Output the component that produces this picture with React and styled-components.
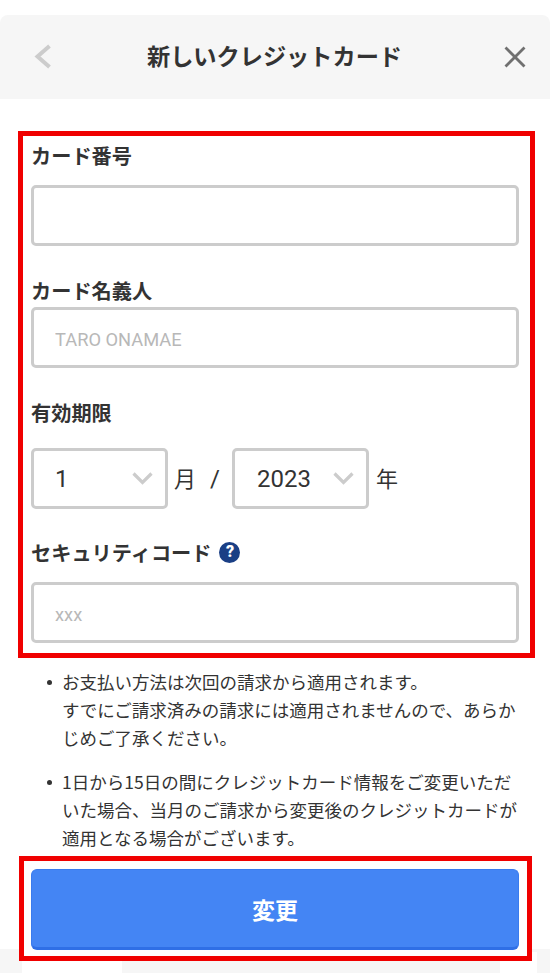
import React from 'react';
import styled, { createGlobalStyle } from 'styled-components';

const GlobalStyle = createGlobalStyle`
  html, body {
    margin: 0;
    padding: 0;
    background: #fff;
  }
  * {
    box-sizing: border-box;
  }
  body {
    font-family: "Noto Sans CJK JP", "Noto Sans", sans-serif;
    color: #333;
  }
`;

const Page = styled.div`
  width: 550px;
  height: 973px;
  overflow: hidden;
  padding-top: 15px;
  display: flex;
  flex-direction: column;
`;

const Header = styled.header`
  height: 84px;
  background: #f6f6f6;
  border-radius: 8px 8px 0 0;
  display: flex;
  align-items: center;
  justify-content: space-between;
  padding: 0 23px 0 31px;
  flex-shrink: 0;
`;

const HeaderTitle = styled.h1`
  margin: 0 9px 0 0;
  padding-bottom: 2px;
  font-size: 23.2px;
  line-height: 1;
  font-weight: 700;
  color: #333;
`;

const IconButton = styled.span`
  display: flex;
  width: 24px;
  height: 24px;
  align-items: center;
  justify-content: center;
`;

const FormBox = styled.section`
  margin: 32px 15px 0 18px;
  height: 527px;
  border: 5px solid #f00000;
  padding: 0 11px 0 8px;
`;

const Field = styled.div`
  height: ${(p) => p.$height}px;
  display: flex;
  flex-direction: column;
  justify-content: flex-end;
`;

const Label = styled.div`
  display: flex;
  align-items: center;
  gap: 8px;
  height: 30px;
  margin-bottom: ${(p) => p.$gap}px;
  font-size: 20.2px;
  font-weight: 700;
  line-height: 30px;
  color: #333;
`;

const TextInput = styled.input`
  display: block;
  width: 100%;
  height: 61px;
  border: 3px solid #ccc;
  border-radius: 5px;
  padding: 3px 21px 0;
  background: #fff;
  outline: none;
  font-family: "Roboto", sans-serif;
  font-size: 18.3px;
  color: #333;

  &::placeholder {
    color: #b8b8b8;
    opacity: 1;
  }
`;

const ExpiryRow = styled.div`
  display: flex;
  align-items: center;
  font-size: 22px;
  color: #333;
`;

const SelectBox = styled.div`
  width: ${(p) => p.$width}px;
  height: 61px;
  border: 3px solid #ccc;
  border-radius: 5px;
  padding: 0 12px 0 ${(p) => p.$left}px;
  display: flex;
  align-items: center;
  justify-content: space-between;
  font-family: "Roboto", sans-serif;
  font-size: 24px;
  color: #333;
`;

const Unit = styled.span`
  margin-left: ${(p) => p.$left}px;
  margin-bottom: 3px;
  line-height: 1;
`;

const Slash = styled.span`
  margin: 0 12px 0 14px;
  font-family: "Roboto", sans-serif;
  font-size: 24px;
  line-height: 1;
`;

const HelpBadge = styled.span`
  width: 21px;
  height: 21px;
  margin-top: -2px;
  border-radius: 50%;
  background: #1a3f85;
  color: #fff;
  display: flex;
  align-items: center;
  justify-content: center;
  font-family: "Roboto", sans-serif;
  font-size: 16px;
  font-weight: 900;
  line-height: 1;
`;

const Notes = styled.ul`
  list-style: none;
  margin: 10px 0 0 0;
  padding: 0 30px 0 62px;
  height: 188px;
  flex-shrink: 0;
`;

const Note = styled.li`
  position: relative;
  font-size: 17.5px;
  line-height: 28px;
  color: #333;
  margin-bottom: 16px;
  white-space: nowrap;

  &::before {
    content: '';
    position: absolute;
    left: -15px;
    top: 12px;
    width: 5px;
    height: 5px;
    border-radius: 50%;
    background: #333;
  }
`;

const ButtonBox = styled.section`
  margin: 0 18px 0 19px;
  height: 105px;
  flex-shrink: 0;
  border: 5px solid #f00000;
  padding: 8px 8px 6px 7px;
  background: #fff;
  position: relative;
  z-index: 1;
`;

const SubmitButton = styled.button`
  display: block;
  width: 100%;
  height: 100%;
  border: 1px solid #3a7bee;
  border-bottom: 3px solid #2f6fe6;
  border-radius: 6px;
  background: #4485f4;
  color: #fff;
  font-family: inherit;
  font-size: 23px;
  font-weight: 700;
`;

const FooterStrip = styled.div`
  flex: 1;
  margin-top: -12px;
  background: #f6f6f6;
  display: flex;
  justify-content: space-between;
  padding: 12px 13px 0 22px;
`;

const FooterTab = styled.div`
  width: ${(p) => p.$width}px;
  margin-top: ${(p) => p.$lift || 0}px;
  background: #fff;
`;

const Chevron = () => (
  <svg width="21" height="13" viewBox="0 0 21 13" fill="none">
    <path d="M1.5 1.5l9 9 9-9" stroke="#ccc" strokeWidth="3.2" />
  </svg>
);

const BackIcon = () => (
  <svg width="18" height="26" viewBox="0 0 18 26" fill="none">
    <path d="M15.5 2L3.5 12.5l12 10.5" stroke="#ccc" strokeWidth="4" />
  </svg>
);

const CloseIcon = () => (
  <svg width="24" height="24" viewBox="0 0 24 24" fill="none">
    <path d="M2.5 2.5l19 19M21.5 2.5l-19 19" stroke="#707070" strokeWidth="2.8" />
  </svg>
);

const App = () => (
  <Page>
    <GlobalStyle />
    <Header>
      <IconButton>
        <BackIcon />
      </IconButton>
      <HeaderTitle>新しいクレジットカード</HeaderTitle>
      <IconButton>
        <CloseIcon />
      </IconButton>
    </Header>

    <FormBox>
      <Field $height={110}>
        <Label $gap={14}>カード番号</Label>
        <TextInput />
      </Field>
      <Field $height={122}>
        <Label $gap={1}>カード名義人</Label>
        <TextInput placeholder="TARO ONAMAE" />
      </Field>
      <Field $height={141}>
        <Label $gap={20}>有効期限</Label>
        <ExpiryRow>
          <SelectBox $width={137} $left={21}>
            1
            <Chevron />
          </SelectBox>
          <Unit $left={6}>月</Unit>
          <Slash>/</Slash>
          <SelectBox $width={137} $left={22}>
            2023
            <Chevron />
          </SelectBox>
          <Unit $left={7}>年</Unit>
        </ExpiryRow>
      </Field>
      <Field $height={134}>
        <Label $gap={14}>
          セキュリティコード
          <HelpBadge>?</HelpBadge>
        </Label>
        <TextInput placeholder="xxx" />
      </Field>
    </FormBox>

    <Notes>
      <Note>
        お支払い方法は次回の請求から適用されます。
        <br />
        すでにご請求済みの請求には適用されませんので、あらか
        <br />
        じめご了承ください。
      </Note>
      <Note>
        1日から15日の間にクレジットカード情報をご変更いただ
        <br />
        いた場合、当月のご請求から変更後のクレジットカードが
        <br />
        適用となる場合がございます。
      </Note>
    </Notes>

    <ButtonBox>
      <SubmitButton>変更</SubmitButton>
    </ButtonBox>

    <FooterStrip>
      <FooterTab $width={100} />
      <FooterTab $width={37} $lift={-9} />
    </FooterStrip>
  </Page>
);

export default App;
